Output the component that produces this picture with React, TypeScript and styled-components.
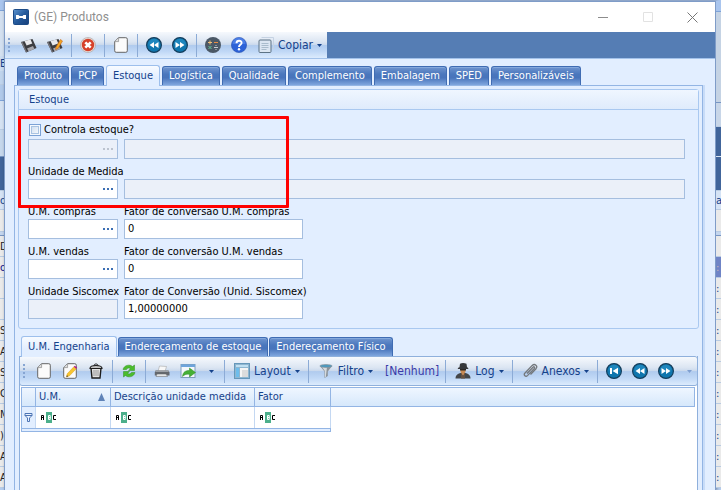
import React from "react";
import styled, { createGlobalStyle, css } from "styled-components";

const ui = '"DejaVu Sans Condensed", "Noto Sans", sans-serif';

const GlobalStyle = createGlobalStyle`
  * { box-sizing: border-box; }
  body { margin: 0; overflow: hidden; font: 11px/14px ${ui}; color: #000; }
  button, input { font: inherit; color: inherit; margin: 0; }
`;

/* ---------- backdrop: the application behind the window ---------- */

const Desktop = styled.div`
  display: grid;
  grid-template-columns: 4px minmax(0, 1fr) 5px;
  grid-template-rows: 1px minmax(0, 1fr);
  height: 100vh;
  overflow: hidden;
  background: #b4ccee;
`;

const TopEdge = styled.div`
  grid-column: 1 / -1;
  background: #a9c5ee;
`;

const Strip = styled.div`
  display: flex;
  flex-direction: column;
  overflow: hidden;
`;

const Slice = styled.div<{ $h: number; $bg: string; $ink?: string; $line?: string }>`
  flex: none;
  height: ${(p) => p.$h}px;
  line-height: ${(p) => p.$h}px;
  overflow: hidden;
  white-space: nowrap;
  background: ${(p) => p.$bg};
  color: ${(p) => p.$ink ?? "#222"};
  border-bottom: 1px solid ${(p) => p.$line ?? "#b9cbe2"};
`;

/* ---------- window ---------- */

const Window = styled.main`
  display: flex;
  flex-direction: column;
  min-width: 0;
  border: 1px solid #7f9cc8;
  border-bottom: 0;
  background: #e2eeff;
  box-shadow: 1px 0 3px #0006;
`;

const TitleBar = styled.header`
  display: flex;
  align-items: center;
  flex: none;
  height: 30px;
  padding-left: 8px;
  background: #fff;
`;

const Title = styled.h1`
  flex: 1;
  margin: 0 0 0 5px;
  font: 400 12px/16px Roboto, "Noto Sans", sans-serif;
  color: #8f8f8f;
`;

const CaptionButton = styled.button`
  display: grid;
  place-items: center;
  width: 45px;
  height: 28px;
  padding: 0;
  border: 0;
  background: none;
`;

const glossy = css`
  background: linear-gradient(#f6f9fd 0%, #dbe5f2 38%, #c9d8ec 50%, #b0cbee 52%, #c0d8f6 75%, #dcebfd 100%);
`;

const CommandRow = styled.div`
  display: flex;
  flex: none;
  height: 27px;
  background: #557db4;
  border-bottom: 1px solid #a3c2ea;
`;

const Toolbar = styled.div<{ $lower?: boolean }>`
  ${glossy}
  display: flex;
  align-items: center;
  flex: none;
  height: ${(p) => (p.$lower ? 30 : 26)}px;
  padding-left: 3px;
  ${(p) =>
    p.$lower &&
    css`
      margin: 0 -1px;
      border: 1px solid #8fb0dc;
      border-radius: 0 3px 3px 3px;
    `}
`;

const Grip = styled.span`
  flex: none;
  width: 2px;
  height: 14px;
  margin-right: 6px;
  background: repeating-linear-gradient(#86a5d2 0 2px, transparent 2px 4px);
`;

const Divider = styled.span`
  flex: none;
  width: 1px;
  height: 23px;
  margin: 0 3px;
  background: #8cabd6;
`;

const IconButton = styled.button`
  display: grid;
  place-items: center;
  flex: none;
  width: 26px;
  height: 24px;
  padding: 0;
  border: 0;
  background: none;
`;

const MenuButton = styled.button`
  display: flex;
  align-items: center;
  flex: none;
  gap: 4px;
  height: 24px;
  padding: 0 5px 0 6px;
  border: 0;
  background: none;
  font-size: 12px;
  color: #15428b;
  white-space: nowrap;
`;

const NarrowButton = styled(IconButton)`
  width: 20px;
`;

const StateText = styled.span`
  padding: 0 3px 0 7px;
  font-size: 12px;
  color: #3a3aa8;
`;

/* ---------- tabs and pages ---------- */

const Tabs = styled.div<{ $inner?: boolean }>`
  display: flex;
  flex: none;
  align-items: flex-end;
  gap: ${(p) => (p.$inner ? 1 : 2)}px;
  height: 20px;
  margin-top: ${(p) => (p.$inner ? 7 : 6)}px;
  padding-left: ${(p) => (p.$inner ? 3 : 12)}px;
`;

const Tab = styled.button<{ $on?: boolean }>`
  position: relative;
  height: 19px;
  padding: 0 6px;
  border: 1px solid #3f6cb3;
  border-bottom: 0;
  border-radius: 3px 3px 0 0;
  background: linear-gradient(#7095cf 0%, #4a77bd 40%, #4874bb 60%, #7fa6de 100%);
  box-shadow: inset 0 1px #84a8dc;
  color: #fff;
  white-space: nowrap;
  line-height: 18px;
  ${(p) =>
    p.$on &&
    css`
      z-index: 1;
      height: 21px;
      margin-bottom: -1px;
      border-color: #9dbfec;
      background: linear-gradient(#f8fbff, #e2eeff 60%);
      box-shadow: none;
      color: #15428b;
    `}
`;

const Page = styled.section`
  display: flex;
  flex-direction: column;
  flex: 1;
  min-height: 0;
  margin: 0 12px 0 9px;
  padding: 3px 3px 0;
  border: 1px solid #93b5e4;
  border-bottom: 0;
  box-shadow: 2px 0 #c8dcf8;
`;

const Group = styled.section`
  position: relative;
  flex: none;
  border: 1px solid #a9c8f0;
  border-radius: 3px;
`;

const GroupTitle = styled.h2`
  margin: 0;
  padding: 0 10px;
  height: 20px;
  border-bottom: 1px solid #a9c8f0;
  background: linear-gradient(#eff6ff, #dfebfc);
  font: 400 11px/20px ${ui};
  color: #15428b;
`;

const Form = styled.form`
  display: grid;
  grid-template-columns: 90px 179px minmax(0, 1fr);
  grid-auto-rows: 40px;
  column-gap: 6px;
  padding: 9px 13px 9px 9px;
`;

const Cell = styled.div<{ $wide?: boolean }>`
  display: flex;
  flex-direction: column;
  justify-content: flex-end;
  min-width: 0;
  grid-column: ${(p) => (p.$wide ? "span 2" : "auto")};
`;

const Label = styled.label`
  display: flex;
  align-items: center;
  height: 14px;
  white-space: nowrap;
`;

const CheckLabel = styled(Label)`
  gap: 3px;
  height: 18px;
`;

const Check = styled.input`
  appearance: none;
  flex: none;
  width: 12px;
  height: 12px;
  border: 1px solid #7ba2d6;
  background: linear-gradient(135deg, #c6d8ee, #fff);
  box-shadow: inset 0 0 0 1px #f4f8fd, inset 0 0 0 2px #a9c3e2;
  && { margin: 0 0 0 1px; }
`;

const Box = styled.span<{ $off?: boolean }>`
  display: flex;
  height: 20px;
  border: 1px solid #a5bedf;
  background: ${(p) => (p.$off ? "#ebf0f9" : "#fff")};
`;

const Entry = styled.input`
  flex: 1;
  min-width: 0;
  padding: 0 3px;
  border: 0;
  outline: 0;
  background: none;
`;

const Browse = styled.button`
  display: grid;
  place-items: center;
  width: 18px;
  padding: 0;
  border: 0;
  background: none;
  color: #3c6fb4;
  &:disabled { color: #bcc3cf; }
`;

const Highlight = styled.div`
  position: absolute;
  top: 26px;
  left: -1px;
  width: 271px;
  height: 92px;
  border: 3px solid #f00;
  border-radius: 1px;
  pointer-events: none;
`;

/* ---------- grid ---------- */

const GridPanel = styled.div`
  display: flex;
  flex-direction: column;
  flex: 1;
  min-height: 0;
  margin: 0 1px;
  border: solid #8fb0dc;
  border-width: 0 1px;
  background: #fff;
`;

const Table = styled.table`
  width: calc(100% - 3px);
  margin: 1px 2px 0 1px;
  border-collapse: separate;
  border-spacing: 0;
  border-left: 1px solid #93b5e4;
  table-layout: fixed;
  color: #15428b;
`;

const Column = styled.col<{ $w?: number }>`
  width: ${(p) => (p.$w ? `${p.$w}px` : "auto")};
`;

const Head = styled.th`
  height: 20px;
  padding: 0 3px;
  border: solid #93b5e4;
  border-width: 1px 1px 1px 0;
  background: linear-gradient(#eff6ff, #d6e8fb);
  font-weight: 400;
  line-height: 16px;
  text-align: left;
  white-space: nowrap;
`;

const HeadText = styled.span`
  display: flex;
  align-items: center;
  justify-content: space-between;
  padding-right: 2px;
`;

const FilterCell = styled.td<{ $mark?: boolean }>`
  height: 21px;
  padding: ${(p) => (p.$mark ? "0 2px" : "0 5px")};
  border-right: 1px solid #c4d8f2;
  background: ${(p) => (p.$mark ? "#e2eeff" : "#fff")};
  line-height: 0;
`;

const RowEnd = styled.td`
  height: 4px;
  padding: 0;
  border: solid #93b5e4;
  border-width: 1px 1px 1px 0;
  background: #e2eeff;
`;

/* ---------- icons ---------- */

const Svg = ({ w = 16, h = 16, children }: { w?: number; h?: number; children: React.ReactNode }) => (
  <svg width={w} height={h} viewBox={`0 0 ${w} ${h}`} aria-hidden="true">{children}</svg>
);

const Caret = ({ fill = "#15428b" }) => <Svg w={5} h={3}><path d="M0 0h5L2.500 3z" fill={fill} /></Svg>;

const AppIcon = () => (
  <Svg>
    <defs><linearGradient id="app" x1="0" y1="0" x2="1" y2="1"><stop stopColor="#5d94cf" /><stop offset=".5" stopColor="#245a9c" /><stop offset="1" stopColor="#173f7a" /></linearGradient></defs>
    <rect x=".5" y=".5" width="15" height="15" rx="1" fill="url(#app)" stroke="#1c4b87" />
    <path d="M3 6h2.500l1 1h3l1-1H13v4h-2.500l-1-1h-3l-1 1H3z" fill="#fff" />
  </Svg>
);

const Save = ({ pen = false }) => (
  <Svg>
    <path d="M0 5 11.500 2 15.500 11 5 15.500z" fill="#3c3c40" />
    <path d="M3.500 4 9.500 2.400 11.300 6.600 5.600 8.400z" fill="#e9e9ec" />
    <path d="M6 11.400 12 9 13.400 12 7.600 14.400z" fill="#a7a7ad" />
    <path d="M0 5 5 15.500 6 15 1.400 4.700z" fill="#77777d" />
    {pen && <path d="m13.500 2.500 2 1.500-4.500 7.500-2.500 1 .5-2.500z" fill="#f5a623" stroke="#c8641a" strokeWidth=".6" />}
  </Svg>
);

const Cancel = () => (
  <Svg>
    <circle cx="8" cy="8" r="7.500" fill="#e4dcd9" stroke="#a9a09e" strokeWidth=".6" />
    <circle cx="8" cy="8" r="6.200" fill="#d6412a" />
    <path d="M5.300 5.300l5.400 5.400m0-5.400-5.400 5.400" stroke="#fff" strokeWidth="2.600" />
  </Svg>
);

const Sheet = ({ pencil = false }) => (
  <Svg>
    <path d="M5.500.7h7.300a1.500 1.500 0 0 1 1.500 1.500v11.600a1.500 1.500 0 0 1-1.500 1.500H3.200a1.500 1.500 0 0 1-1.500-1.500V4.700z" fill="#fbfbfb" stroke="#666" />
    <path d="M5.600.9v3.700H1.900" fill="#ddd" stroke="#888" strokeWidth=".7" />
    {pencil && <>
      <path d="m11.800 3.800 2.400 2-6.700 7-3 1.200.7-3.200z" fill="#f7c531" stroke="#d89a1c" strokeWidth=".5" />
      <path d="m11.800 3.800 1-1.100 2.400 2-1 1.100z" fill="#b2178e" />
      <path d="m4.500 14 .4-1.700 1.100 1z" fill="#222" />
    </>}
  </Svg>
);

const Nav = ({ kind }: { kind: "first" | "back" | "next" }) => (
  <Svg>
    <circle cx="8" cy="8" r="7.400" fill="#0f76ae" stroke="#153e5c" strokeWidth="1.200" />
    <path d="M2.200 7.500a5.800 5.800 0 0 1 11.600 0z" fill="#2791c7" opacity=".6" />
    {kind === "back" && <path d="M8 5v6L3.500 8zM12.500 5v6L8 8z" fill="#fff" />}
    {kind === "next" && <path d="M8 5v6l4.500-3zM3.500 5v6L8 8z" fill="#fff" />}
    {kind === "first" && <path d="M4 5h2v6H4zM12 4.800v6.400L6.500 8z" fill="#fff" />}
  </Svg>
);

const Calculator = () => (
  <Svg>
    <circle cx="8" cy="8" r="8" fill="#4b5866" />
    <path d="M3 5.500h4M5 3.500v4" stroke="#f2c078" />
    <path d="M9 5.500h4" stroke="#e88b43" />
    <path d="m3.500 9 3 3m0-3-3 3" stroke="#62c39a" />
    <path d="M9 10.500h4" stroke="#c5ccd2" /><path d="M10.500 8.500h1m-1 4h1" stroke="#c5ccd2" />
  </Svg>
);

const Help = () => (
  <Svg>
    <circle cx="8" cy="8" r="7.600" fill="#2c62d8" stroke="#2a52ae" strokeWidth=".6" />
    <path d="M1.500 7a6.500 6.500 0 0 1 13 0z" fill="#5f90ee" opacity=".6" />
    <path d="M5.500 6.200C5.500 2.800 10.700 3 10.600 6 10.500 7.900 8 7.800 8 9.900" fill="none" stroke="#fff" strokeWidth="1.900" />
    <circle cx="8" cy="12.300" r="1.200" fill="#fff" />
  </Svg>
);

const Copy = () => (
  <Svg>
    <path d="M3.500.5h12v11h-2" fill="none" stroke="#c5d2e2" />
    <rect x="1" y="3" width="12" height="12.500" rx="1" fill="#dbe6f2" stroke="#5d7385" />
    <path d="M3.500 6.500h7m-7 2h7m-7 2h7m-7 2h5" stroke="#a9bccc" />
  </Svg>
);

const Trash = () => (
  <Svg>
    <path d="M3 5h10l-1 10H4z" fill="#e2e2e2" stroke="#1d1d1d" strokeWidth="1.400" />
    <path d="M6 7v6m2-6v6m2-6v6" stroke="#888" strokeWidth=".8" />
    <path d="M2 5.500c0-2 2-3 6-3s6 1 6 3z" fill="#c4c4c4" stroke="#1d1d1d" strokeWidth="1.200" />
    <path d="M6 2.500c0-2 4-2 4 0" fill="none" stroke="#1d1d1d" />
  </Svg>
);

const Refresh = () => (
  <Svg>
    <path d="M2 6.500C3 2 9 1 11.500 3.500L13.500 2v5.500H7.500l2-1.800C8 4.500 6 5 5.500 6.500z" fill="#4bbd2c" stroke="#2e8d1e" strokeWidth=".5" />
    <path d="M14 9.500c-1 4.500-7 5.500-9.500 3L2.500 14V8.500h6l-2 1.800c1.500 1.200 3.500.7 4-.8z" fill="#4bbd2c" stroke="#2e8d1e" strokeWidth=".5" />
  </Svg>
);

const Printer = () => (
  <Svg>
    <path d="m5.500 3 7 .5-1.500 5H4z" fill="#f7f7f7" stroke="#999" strokeWidth=".5" />
    <path d="M1.500 7.500h13l1 2v3H.8v-3z" fill="#63686e" />
    <path d="M2 7.500h12l1 1.500H1z" fill="#9da1a6" />
    <path d="M3 11h9l1.500 2.500H2z" fill="#e4e6e8" stroke="#666" strokeWidth=".5" />
  </Svg>
);

const Export = () => (
  <Svg>
    <rect x="1" y="1.500" width="14" height="13" fill="#f3f7fb" stroke="#7f9dbb" />
    <path d="M1 1.500h14v2.500H1z" fill="#6da4dc" />
    <path d="M2.500 13.500c.5-4.500 3-6 7-6V5l6 4.500-6 4.500v-2.800c-3-.2-5 .3-7 2.300z" fill="#45b035" stroke="#2f8a26" strokeWidth=".5" />
  </Svg>
);

const LayoutIcon = () => (
  <Svg>
    <rect x=".5" y=".5" width="15" height="15" fill="#8fb6d0" stroke="#6597ba" />
    <path d="M2 2h12v2H2z" fill="#bfe0f3" /><path d="M2 5h3v9H2z" fill="#6dbdec" />
    <path d="M6 5h8v9H6z" fill="#f5f5f5" /><path d="M8 7h6v7H8z" fill="#dcdcdc" />
  </Svg>
);

const Funnel = () => (
  <Svg>
    <path d="M2 3h12L9.800 8.500V13L6.500 15V8.500z" fill="#8b939a" />
    <path d="M4 4h5L7.800 14 7 14V8.300z" fill="#d6dadd" />
    <ellipse cx="8" cy="3" rx="6.200" ry="1.500" fill="#4b98bd" stroke="#8a959d" strokeWidth=".7" />
  </Svg>
);

const Spy = () => (
  <Svg>
    <path d="M.5 15.500c0-4 3-5 5-5.500h5c2 .5 5 1.500 5 5.500z" fill="#444649" />
    <path d="M5.500 5.500h5V9L8 13 5.500 9z" fill="#c78952" />
    <path d="m6 10 2 3 2-3v5.500H6z" fill="#66503f" />
    <path d="M5 .8C7-.2 9.500 0 11.500.8l.5 3.500c1 .3 1.500 1 1.300 1.700H2.800c0-1 .7-1.400 1.700-1.700z" fill="#35373a" />
    <path d="M5 6h6v1.500H5z" fill="#2b2623" />
  </Svg>
);

const Clip = () => (
  <Svg>
    <path d="m5 10.500 6-6.300c1-1 2.200.2 1.300 1.200l-6.800 7.200c-1.800 1.700-4.400-.4-2.700-2.400l7.400-7.800c2.600-2.300 6 .6 3.800 3.300L8.500 11.500" fill="none" stroke="#73777b" strokeWidth="1.300" />
  </Svg>
);

const Dots = () => <Svg w={10} h={2}><path d="M0 0h2v2H0zM4 0h2v2H4zM8 0h2v2H8z" fill="currentColor" /></Svg>;

const SortUp = () => <Svg w={7} h={8}><path d="M3.500 0 7 8H0z" fill="#5f83b8" /></Svg>;

const FilterMark = () => (
  <Svg w={9} h={9}><path d="M1 .5h7v2L5.500 5v3.500h-2V5L1 2.500zM1 2.500h7" fill="#e9f2ff" stroke="#4d74b4" /></Svg>
);

const ContainsMark = () => (
  <Svg w={16} h={11}>
    <path d="M5 0h6v11H5z" fill="#4caf8b" />
    <path d="M.5 8V3.500h2V8M.5 5.500h2M15 3.500h-2.500v4H15" fill="none" stroke="#000" />
    <path d="M7.500 3.500h1.700v4H7.500zM7.500 5.500h2" fill="none" stroke="#fff" />
  </Svg>
);

/* ---------- composition ---------- */

type FieldProps = { id: string; label: string; value?: string; browse?: boolean; off?: boolean };

const Field = ({ id, label, value = "", browse, off }: FieldProps) => (
  <Cell>
    <Label htmlFor={id}>{label}</Label>
    <Box $off={off}>
      <Entry id={id} defaultValue={value} disabled={off} />
      {browse && <Browse type="button" aria-label={`Buscar ${label}`}><Dots /></Browse>}
    </Box>
  </Cell>
);

const Tool = ({ name, children }: { name: string; children: React.ReactNode }) => (
  <IconButton aria-label={name}>{children}</IconButton>
);

const mainTabs = ["Produto", "PCP", "Estoque", "Logística", "Qualidade", "Complemento", "Embalagem", "SPED", "Personalizáveis"];
const innerTabs = ["U.M. Engenharia", "Endereçamento de estoque", "Endereçamento Físico"];
const rowInitials = ["", "", "S", "A", "S", "C", "M", ")", "A", "A"];

export default function App() {
  return (
    <>
      <GlobalStyle />
      <Desktop>
        <TopEdge />
        <Strip aria-hidden="true">
          <Slice $h={10} $bg="#a9c5ee" $line="#7ea3d8" />
          <Slice $h={45} $bg="#d3e0f0" $line="#d3e0f0" />
          <Slice $h={15} $bg="#cbdcf0" $ink="#15428b" $line="#cbdcf0">E</Slice>
          <Slice $h={14} $bg="#bfd4ed" />
          <Slice $h={16} $bg="#b0c9ea" $line="#7ea3d8" />
          <Slice $h={29} $bg="#d5e2f2" />
          <Slice $h={27} $bg="#c5d7ec" $line="#7795c3" />
          <Slice $h={34} $bg="#41659b" $ink="#fff" />
          <Slice $h={19} $bg="#d5e3f5" $ink="#15428b">o</Slice>
          <Slice $h={22} $bg="#eaeaea" />
          <Slice $h={4} $bg="#c4d6ee" $line="#7795c3" />
          <Slice $h={21} $bg="#eaeaea">D</Slice>
          <Slice $h={21} $bg="#eaeaea" $ink="#10108c">o</Slice>
          {rowInitials.map((c, i) => <Slice key={i} $h={21} $bg="#eaeaea">{c}</Slice>)}
        </Strip>

        <Window>
          <TitleBar>
            <AppIcon />
            <Title>(GE) Produtos</Title>
            <CaptionButton aria-label="Minimizar"><Svg w={10} h={10}><path d="M0 5.500h10" stroke="#8c8c8c" /></Svg></CaptionButton>
            <CaptionButton aria-label="Maximizar" disabled><Svg w={10} h={10}><path d="M.5.500h9v9h-9z" fill="none" stroke="#e2e2e2" /></Svg></CaptionButton>
            <CaptionButton aria-label="Fechar"><Svg w={11} h={11}><path d="m.5.500 10 10m0-10-10 10" stroke="#777" /></Svg></CaptionButton>
          </TitleBar>

          <CommandRow>
            <Toolbar>
              <Grip />
              <Tool name="Salvar"><Save /></Tool>
              <Tool name="Salvar e editar"><Save pen /></Tool>
              <Divider />
              <Tool name="Cancelar"><Cancel /></Tool>
              <Divider />
              <Tool name="Novo"><Sheet /></Tool>
              <Divider />
              <Tool name="Anterior"><Nav kind="back" /></Tool>
              <Tool name="Próximo"><Nav kind="next" /></Tool>
              <Divider />
              <Tool name="Calculadora"><Calculator /></Tool>
              <Tool name="Ajuda"><Help /></Tool>
              <MenuButton><Copy />Copiar<Caret /></MenuButton>
            </Toolbar>
          </CommandRow>

          <Tabs role="tablist">
            {mainTabs.map((t) => <Tab key={t} role="tab" aria-selected={t === "Estoque"} $on={t === "Estoque"}>{t}</Tab>)}
          </Tabs>

          <Page>
            <Group>
              <GroupTitle>Estoque</GroupTitle>
              <Form>
                <Cell>
                  <CheckLabel><Check type="checkbox" />Controla estoque?</CheckLabel>
                  <Box $off>
                    <Entry aria-label="Código do controle" disabled />
                    <Browse type="button" disabled aria-label="Buscar controle"><Dots /></Browse>
                  </Box>
                </Cell>
                <Cell $wide><Box $off><Entry aria-label="Descrição do controle" disabled /></Box></Cell>

                <Field id="unit" label="Unidade de Medida" browse />
                <Cell $wide><Box $off><Entry aria-label="Descrição da unidade" disabled /></Box></Cell>

                <Field id="buy" label="U.M. compras" browse />
                <Field id="buyFactor" label="Fator de conversão U.M. compras" value="0" />
                <span />
                <Field id="sell" label="U.M. vendas" browse />
                <Field id="sellFactor" label="Fator de conversão U.M. vendas" value="0" />
                <span />
                <Field id="sisco" label="Unidade Siscomex" off />
                <Field id="siscoFactor" label="Fator de Conversão (Unid. Siscomex)" value="1,00000000" />
              </Form>
              <Highlight />
            </Group>

            <Tabs $inner role="tablist">
              {innerTabs.map((t, i) => <Tab key={t} role="tab" aria-selected={i === 0} $on={i === 0}>{t}</Tab>)}
            </Tabs>

            <GridPanel>
              <Toolbar $lower>
                <Grip />
                <Tool name="Novo"><Sheet /></Tool>
                <Tool name="Editar"><Sheet pencil /></Tool>
                <Tool name="Excluir"><Trash /></Tool>
                <Divider />
                <Tool name="Atualizar"><Refresh /></Tool>
                <Divider />
                <Tool name="Imprimir"><Printer /></Tool>
                <Tool name="Exportar"><Export /></Tool>
                <NarrowButton aria-label="Opções de exportação"><Caret /></NarrowButton>
                <Divider />
                <MenuButton><LayoutIcon />Layout<Caret /></MenuButton>
                <Divider />
                <MenuButton><Funnel />Filtro<Caret /></MenuButton>
                <StateText>[Nenhum]</StateText>
                <Divider />
                <MenuButton><Spy />Log<Caret /></MenuButton>
                <Divider />
                <MenuButton><Clip />Anexos<Caret /></MenuButton>
                <Divider />
                <Tool name="Primeiro"><Nav kind="first" /></Tool>
                <Tool name="Anterior"><Nav kind="back" /></Tool>
                <Tool name="Próximo"><Nav kind="next" /></Tool>
                <NarrowButton aria-label="Mais"><Caret fill="#7f9fd0" /></NarrowButton>
              </Toolbar>
              <Table>
                <colgroup><Column $w={14} /><Column $w={75} /><Column $w={144} /><Column $w={76} /><Column /></colgroup>
                <thead>
                  <tr>
                    <Head aria-label="Filtro" />
                    <Head><HeadText>U.M.<SortUp /></HeadText></Head>
                    <Head>Descrição unidade medida</Head>
                    <Head>Fator</Head>
                    <Head aria-hidden="true" />
                  </tr>
                </thead>
                <tbody>
                  <tr>
                    <FilterCell $mark><FilterMark /></FilterCell>
                    <FilterCell><ContainsMark /></FilterCell>
                    <FilterCell><ContainsMark /></FilterCell>
                    <FilterCell><ContainsMark /></FilterCell>
                    <td />
                  </tr>
                  <tr><RowEnd colSpan={4} /><td /></tr>
                </tbody>
              </Table>
            </GridPanel>
          </Page>
        </Window>

        <Strip aria-hidden="true">
          <Slice $h={11} $bg="#a9c5ee" $line="#7ea3d8" />
          <Slice $h={91} $bg="#c5d3e4" $line="#7795c3" />
          <Slice $h={24} $bg="#c8d6e8" />
          <Slice $h={30} $bg="#41659b" $line="#dbe6f4" />
          <Slice $h={34} $bg="#41659b" />
          <Slice $h={19} $bg="#d5e3f5" $ink="#15428b">a</Slice>
          <Slice $h={22} $bg="#eaeaea" />
          <Slice $h={4} $bg="#c4d6ee" $line="#7795c3" />
          <Slice $h={21} $bg="#eaeaea" />
          <Slice $h={21} $bg="#6f84c6" $ink="#c9b6b6">:</Slice>
          {rowInitials.map((_, i) => <Slice key={i} $h={21} $bg="#eaeaea" $ink="#15428b">:</Slice>)}
        </Strip>
      </Desktop>
    </>
  );
}
